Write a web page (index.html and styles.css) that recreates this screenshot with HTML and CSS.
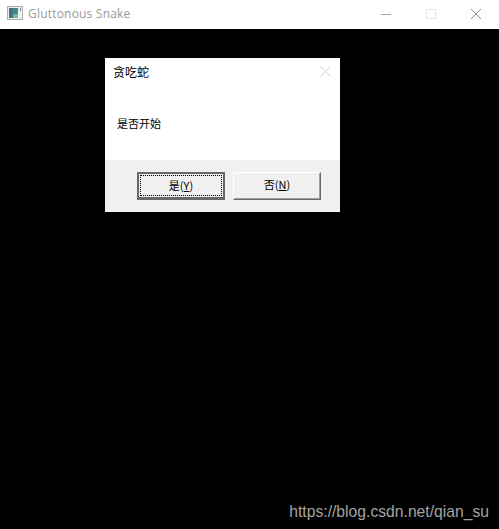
FILE: index.html
```html
<!DOCTYPE html>
<html lang="zh">
<head>
<meta charset="utf-8">
<title>Gluttonous Snake</title>
<link rel="stylesheet" href="styles.css">
</head>
<body>
<div class="window">
  <header class="titlebar">
    <svg class="app-icon" width="16" height="14" viewBox="0 0 16 14">
      <rect x="0.5" y="0.5" width="15" height="13" fill="#eef0f0" stroke="#a9adb0"/>
      <rect x="2" y="2" width="9" height="10" fill="#3f8a8c"/>
      <rect x="2" y="2" width="4" height="10" fill="#4d6f86"/>
      <rect x="6" y="8" width="5" height="4" fill="#79b894"/>
      <rect x="13" y="2" width="1" height="3" fill="#7a8a96"/>
    </svg>
    <span class="app-title">Gluttonous Snake</span>
    <div class="controls">
      <div class="ctl"><svg width="12" height="12" viewBox="0 0 12 12"><path d="M1 6.5H11" stroke="#a8a8a8"/></svg></div>
      <div class="ctl"><svg width="12" height="12" viewBox="0 0 12 12"><rect x="1.5" y="1.5" width="9" height="9" fill="none" stroke="#e6e6e6"/></svg></div>
      <div class="ctl"><svg width="12" height="12" viewBox="0 0 12 12"><path d="M1 1L11 11M11 1L1 11" stroke="#8c8c8c"/></svg></div>
    </div>
  </header>
  <main class="client">
    <section class="dialog">
      <div class="dialog-head">
        <span class="dialog-title">贪吃蛇</span>
        <svg class="dialog-close" width="11" height="11" viewBox="0 0 11 11"><path d="M0.5 0.5L10.5 10.5M10.5 0.5L0.5 10.5" stroke="#cfcfcf"/></svg>
      </div>
      <div class="dialog-body">是否开始</div>
      <div class="dialog-foot">
        <button class="btn btn-default"><span class="focus">是(<u>Y</u>)</span></button>
        <button class="btn"><span class="label">否(<u>N</u>)</span></button>
      </div>
    </section>
    <div class="watermark">https://blog.csdn.net/qian_su</div>
  </main>
</div>
</body>
</html>
```
FILE: styles.css
```css
* { box-sizing: border-box; }
html, body { margin: 0; height: 100%; }
body { font-family: "Noto Sans CJK SC", "Liberation Sans", sans-serif; background: #000; overflow: hidden; }
.window { display: flex; flex-direction: column; height: 529px; width: 499px; }
.titlebar { height: 29px; background: #fff; display: flex; align-items: center; padding: 0 1px 0 7px; flex: none; }
.app-icon { margin-top: -4px; }
.app-title { margin-left: 5px; margin-top: -2px; font: 12px "Open Sans", "Noto Sans", sans-serif; color: #999; letter-spacing: 0.2px; }
.controls { margin-left: auto; display: flex; }
.ctl { width: 45px; height: 29px; display: flex; align-items: center; justify-content: center; margin-top: -2px; }
.client { flex: 1; position: relative; padding: 29px 0 0 105px; background: #000; }
.dialog { width: 235px; height: 154px; background: #fff; display: flex; flex-direction: column; }
.dialog-head { height: 29px; display: flex; align-items: center; justify-content: space-between; padding: 0 9px 0 8px; flex: none; }
.dialog-title { font-size: 12px; line-height: 29px; color: #000; margin-top: -2px; }
.dialog-close { margin: 0 0 0 auto; position: relative; top: -1px; }
.dialog-body { flex: 1; padding: 28px 0 0 12px; font-size: 11px; line-height: 16px; color: #000; }
.dialog-foot { height: 52px; flex: none; background: #f0f0f0; display: flex; gap: 8px; padding: 12px 0 0 32px; }
.btn { width: 88px; height: 28px; padding: 0 0 4px; background: #f0f0f0; font: 11px/16px "Noto Sans CJK SC", sans-serif; color: #000; border: 1px solid; border-color: #fff #696969 #696969 #fff; box-shadow: inset -1px -1px 0 #a0a0a0; display: flex; align-items: center; justify-content: center; }
.btn-default { border: 2px solid #696969; border-bottom-width: 3px; box-shadow: none; padding: 1px; }
.focus { width: 100%; height: 100%; border: 1px dotted #000; display: flex; align-items: center; justify-content: center; white-space: pre; padding-bottom: 2px; }
.watermark { position: absolute; right: 10px; bottom: 5px; font: 15.7px/24px "Liberation Sans", sans-serif; color: #a3a3a3; }
```
